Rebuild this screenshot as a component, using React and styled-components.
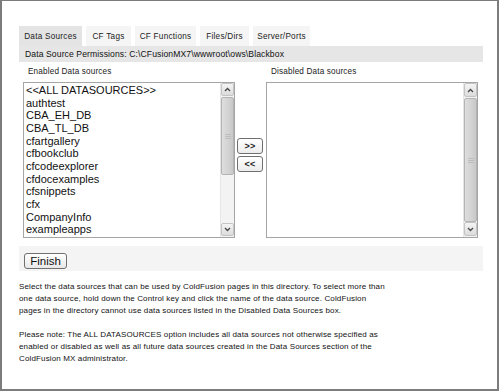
import React from "react";
import styled, { createGlobalStyle } from "styled-components";

const GlobalStyle = createGlobalStyle`
  html, body {
    margin: 0;
    padding: 0;
    background: #ffffff;
  }
  * {
    box-sizing: border-box;
  }
`;

const tabs = [
  { label: "Data Sources", width: 63, active: true },
  { label: "CF Tags", width: 45 },
  { label: "CF Functions", width: 61 },
  { label: "Files/Dirs", width: 49 },
  { label: "Server/Ports", width: 57 },
];

const enabledSources = [
  "<<ALL DATASOURCES>>",
  "authtest",
  "CBA_EH_DB",
  "CBA_TL_DB",
  "cfartgallery",
  "cfbookclub",
  "cfcodeexplorer",
  "cfdocexamples",
  "cfsnippets",
  "cfx",
  "CompanyInfo",
  "exampleapps",
];

const Frame = styled.div`
  width: 499px;
  height: 391px;
  border: 2px solid #7c7c7c;
  border-top-width: 1px;
  padding: 25px 0 0 17px;
  font-family: "Liberation Sans", Arial, sans-serif;
  color: #1a1a1a;
`;

const Content = styled.div`
  width: 464px;
  display: flex;
  flex-direction: column;
`;

const TabRow = styled.div`
  display: flex;
  gap: 4px;
  height: 20px;
`;

const Tab = styled.div`
  width: ${(p) => p.$w}px;
  display: flex;
  align-items: center;
  justify-content: center;
  font-size: 8.2px;
  letter-spacing: 0.25px;
  background: ${(p) => (p.$active ? "#e4e4e4" : "#f5f5f5")};
  color: #222;
`;

const PathBar = styled.div`
  height: 16px;
  background: #e6e6e6;
  padding-left: 6px;
  display: flex;
  align-items: center;
  font-size: 8.6px;
  letter-spacing: 0.1px;
  color: #111;
`;

const Lists = styled.div`
  display: grid;
  grid-template-columns: 212px 31px 212px;
  grid-template-rows: 20px 156px;
  margin-left: 4px;
`;

const ListLabel = styled.div`
  padding-left: 5px;
  padding-top: 5px;
  font-size: 8.2px;
  letter-spacing: 0.15px;
  color: #222;
`;

const ListBox = styled.div`
  display: flex;
  border: 1px solid #a5a5a5;
  background: #fff;
  overflow: hidden;
`;

const Items = styled.div`
  flex: 1;
  padding: 1px 0 0 2px;
  font-size: 11px;
  line-height: 12.67px;
  color: #111;
  white-space: nowrap;
`;

const Scrollbar = styled.div`
  width: 14px;
  display: flex;
  flex-direction: column;
  background: #f3f3f3;
  border-left: 1px solid #e6e6e6;
`;

const ScrollButton = styled.div`
  height: 14px;
  margin: 0 0 1px 0;
  border: 1px solid #c4c4c4;
  border-radius: 2px;
  background: linear-gradient(#f4f4f4, #dcdcdc);
  display: flex;
  align-items: center;
  justify-content: center;
`;

const Track = styled.div`
  flex: 1;
  display: flex;
  flex-direction: column;
  padding-bottom: ${(p) => p.$rest}px;
`;

const Thumb = styled.div`
  height: ${(p) => (p.$h ? `${p.$h}px` : "auto")};
  flex: ${(p) => (p.$h ? "none" : "1")};
  border: 1px solid #b4b4b4;
  border-radius: 2px;
  background: linear-gradient(90deg, #dedede, #d2d2d2 60%, #c8c8c8);
  display: flex;
  align-items: center;
  justify-content: center;
`;

const Grip = styled.div`
  width: 6px;
  height: 5px;
  border-top: 1px solid #bdbdbd;
  border-bottom: 1px solid #bdbdbd;
  position: relative;
  &::after {
    content: "";
    position: absolute;
    left: 0;
    right: 0;
    top: 1px;
    border-top: 1px solid #bdbdbd;
  }
`;

const MoveButtons = styled.div`
  display: flex;
  flex-direction: column;
  gap: 2px;
  padding: 56px 0 0 2px;
`;

const MoveButton = styled.button`
  width: 26px;
  height: 16px;
  padding: 0;
  border: 1px solid #6f6f6f;
  border-radius: 3px;
  background: linear-gradient(#ffffff, #ececec);
  font-family: "Liberation Sans", Arial, sans-serif;
  font-size: 9px;
  font-weight: bold;
  letter-spacing: 0.3px;
  color: #222;
  display: flex;
  align-items: center;
  justify-content: center;
`;

const FinishBar = styled.div`
  margin-top: 8px;
  height: 25px;
  background: #f4f4f4;
  padding: 5px 0 0 5px;
`;

const FinishButton = styled.button`
  width: 43px;
  height: 16px;
  padding: 0;
  border: 1px solid #707070;
  border-radius: 3px;
  background: linear-gradient(#ffffff, #e8e8e8);
  font-family: "Liberation Sans", Arial, sans-serif;
  font-size: 11.5px;
  color: #111;
`;

const Note = styled.p`
  margin: ${(p) => p.$top}px 0 0 0;
  font-size: 8px;
  line-height: 12px;
  letter-spacing: 0.14px;
  color: #111;
`;

const Arrow = ({ up }) => (
  <svg width="7" height="5" viewBox="0 0 7 5">
    <path
      d={up ? "M1 4 L3.5 1.5 L6 4" : "M1 1 L3.5 3.5 L6 1"}
      fill="none"
      stroke="#4a4a4a"
      strokeWidth="1.4"
    />
  </svg>
);

const ScrollBarView = ({ thumb, rest }) => (
  <Scrollbar>
    <ScrollButton>
      <Arrow up />
    </ScrollButton>
    <Track $rest={rest}>
      <Thumb $h={thumb}>
        <Grip />
      </Thumb>
    </Track>
    <ScrollButton>
      <Arrow />
    </ScrollButton>
  </Scrollbar>
);

export default function App() {
  return (
    <>
      <GlobalStyle />
      <Frame>
        <Content>
          <TabRow>
            {tabs.map((t) => (
              <Tab key={t.label} $w={t.width} $active={t.active}>
                {t.label}
              </Tab>
            ))}
          </TabRow>
          <PathBar>
            Data Source Permissions: C:\CFusionMX7\wwwroot\ows\Blackbox
          </PathBar>

          <Lists>
            <ListLabel>Enabled Data sources</ListLabel>
            <div />
            <ListLabel>Disabled Data sources</ListLabel>

            <ListBox>
              <Items>
                {enabledSources.map((s) => (
                  <div key={s}>{s}</div>
                ))}
              </Items>
              <ScrollBarView thumb={78} rest={48} />
            </ListBox>

            <MoveButtons>
              <MoveButton>&gt;&gt;</MoveButton>
              <MoveButton>&lt;&lt;</MoveButton>
            </MoveButtons>

            <ListBox>
              <Items />
              <ScrollBarView rest={0} />
            </ListBox>
          </Lists>

          <FinishBar>
            <FinishButton>Finish</FinishButton>
          </FinishBar>

          <Note $top={10}>
            Select the data sources that can be used by ColdFusion pages in this directory. To select more than
            <br />
            one data source, hold down the Control key and click the name of the data source. ColdFusion
            <br />
            pages in the directory cannot use data sources listed in the Disabled Data Sources box.
          </Note>
          <Note $top={12}>
            Please note: The ALL DATASOURCES option includes all data sources not otherwise specified as
            <br />
            enabled or disabled as well as all future data sources created in the Data Sources section of the
            <br />
            ColdFusion MX administrator.
          </Note>
        </Content>
      </Frame>
    </>
  );
}
